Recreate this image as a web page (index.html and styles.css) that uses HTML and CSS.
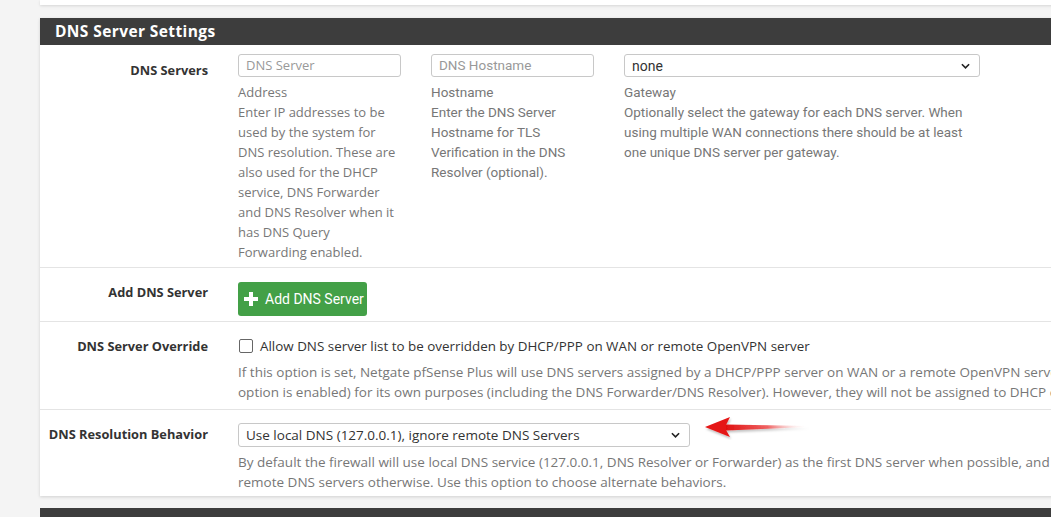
FILE: index.html
```html
<!DOCTYPE html>
<html>
<head>
<meta charset="utf-8">
<link rel="stylesheet" href="styles.css">
</head>
<body>
<div class="page">
  <div class="prev-panel"></div>
  <div class="panel">
    <div class="panel-heading">DNS Server Settings</div>
    <div class="row row-servers">
      <div class="label">DNS Servers</div>
      <div class="content cols">
        <div class="col col-a">
          <div class="input"><span class="ph">DNS Server</span></div>
          <div class="help sans">Address<br>Enter IP addresses to be used by the system for DNS resolution. These are also used for the DHCP service, DNS Forwarder and DNS Resolver when it has DNS Query Forwarding enabled.</div>
        </div>
        <div class="col col-b">
          <div class="input"><span class="ph narrow">DNS Hostname</span></div>
          <div class="help narrow">Hostname<br>Enter the DNS Server Hostname for TLS Verification in the DNS Resolver (optional).</div>
        </div>
        <div class="col col-c">
          <div class="select small"><span class="narrow">none</span>
            <svg class="chev" viewBox="0 0 10 6" width="9" height="6"><path d="M1 1 L5 5 L9 1" fill="none" stroke="#222" stroke-width="1.8"/></svg>
          </div>
          <div class="help narrow">Gateway<br>Optionally select the gateway for each DNS server. When using multiple WAN connections there should be at least one unique DNS server per gateway.</div>
        </div>
      </div>
    </div>
    <div class="row row-add">
      <div class="label">Add DNS Server</div>
      <div class="content">
        <div class="btn">
          <svg class="plus" viewBox="0 0 14 14" width="14" height="14"><path d="M5 0h4v5h5v4H9v5H5V9H0V5h5z" fill="#fff"/></svg>
          <span>Add DNS Server</span>
        </div>
      </div>
    </div>
    <div class="row row-override">
      <div class="label">DNS Server Override</div>
      <div class="content">
        <div class="check-line"><span class="checkbox"></span><span>Allow DNS server list to be overridden by DHCP/PPP on WAN or remote OpenVPN server</span></div>
        <div class="help sans wide w-override">If this option is set, Netgate pfSense Plus will use DNS servers assigned by a DHCP/PPP server on WAN or a remote OpenVPN server (if the option is enabled) for its own purposes (including the DNS Forwarder/DNS Resolver). However, they will not be assigned to DHCP clients.</div>
      </div>
    </div>
    <div class="row row-behavior">
      <div class="label">DNS Resolution Behavior</div>
      <div class="content">
        <div class="behavior-line">
          <div class="select big"><span>Use local DNS (127.0.0.1), ignore remote DNS Servers</span>
            <svg class="chev" viewBox="0 0 10 6" width="9" height="6"><path d="M1 1 L5 5 L9 1" fill="none" stroke="#222" stroke-width="1.8"/></svg>
          </div>
          <svg class="arrow" viewBox="0 0 110 26" width="110" height="26">
            <defs>
              <linearGradient id="tail" x1="0" y1="0" x2="1" y2="0">
                <stop offset="0" stop-color="#e01010"/>
                <stop offset="0.5" stop-color="#ee4040" stop-opacity="0.8"/>
                <stop offset="1" stop-color="#ffffff" stop-opacity="0"/>
              </linearGradient>
              <filter id="sh" x="-10%" y="-30%" width="130%" height="170%">
                <feDropShadow dx="1" dy="2" stdDeviation="1.2" flood-color="#000" flood-opacity="0.25"/>
              </filter>
            </defs>
            <g filter="url(#sh)">
              <path d="M22 10.5 L105 12 L105 13 L22 16.5 Z" fill="url(#tail)"/>
              <path d="M1 13 L26 3 L22 11 L22 16 L26 23 Z" fill="#e51616"/>
            </g>
          </svg>
        </div>
        <div class="help sans wide w-behavior">By default the firewall will use local DNS service (127.0.0.1, DNS Resolver or Forwarder) as the first DNS server when possible, and it will fall back to remote DNS servers otherwise. Use this option to choose alternate behaviors.</div>
      </div>
    </div>
  </div>
  <div class="next-panel"></div>
</div>
</body>
</html>
```

FILE: styles.css
```css
html, body {
  margin: 0;
  padding: 0;
  overflow: hidden;
}
body {
  width: 1051px;
  height: 517px;
  background: #f4f4f4;
  font-family: "Open Sans", "Liberation Sans", sans-serif;
  color: #333;
}
.page {
  padding-left: 40px;
}
.prev-panel {
  width: 1100px;
  height: 5px;
  background: #fff;
  box-shadow: 0 1px 3px rgba(0,0,0,0.12);
  margin-bottom: 13px;
}
.panel {
  width: 1100px;
  background: #fff;
  box-shadow: 0 1px 3px rgba(0,0,0,0.15);
}
.panel-heading {
  height: 27px;
  line-height: 27px;
  background: #3d3d3d;
  color: #fff;
  font-family: "Open Sans", sans-serif;
  font-weight: 700;
  font-size: 15.5px;
  letter-spacing: 0.4px;
  padding-left: 15px;
}
.row {
  display: flex;
  border-top: 1px solid #e4e4e4;
}
.panel-heading + .row {
  border-top: none;
}
.label {
  width: 168px;
  padding-right: 30px;
  text-align: right;
  font-family: "Open Sans", sans-serif;
  font-weight: 700;
  font-size: 12.8px;
  line-height: 20px;
  color: #333;
  flex-shrink: 0;
}
.content {
  flex: 1;
}
.row-servers .label { padding-top: 15px; }
.row-servers .content { padding-top: 9px; padding-bottom: 5px; }
.cols {
  display: flex;
  gap: 30px;
}
.col-a, .col-b { width: 163px; }
.col-c { width: 356px; }
.input {
  height: 21px;
  border: 1px solid #c8c8c8;
  border-radius: 3px;
  padding-left: 7px;
  line-height: 21px;
  font-size: 13px;
}
.ph { color: #999; }
.help {
  color: #777;
  font-size: 13px;
  line-height: 20px;
  margin-top: 5px;
}
.sans { font-family: "Open Sans", sans-serif; }
.narrow { font-family: Roboto, sans-serif; font-size: 13.5px; }
.select {
  position: relative;
  border: 1px solid #c8c8c8;
  border-radius: 3px;
  background: #fff;
  padding-left: 7px;
  box-sizing: border-box;
  display: flex;
  align-items: center;
  justify-content: space-between;
  padding-right: 9px;
}
.select.small { height: 23px; font-size: 14px; color: #333; }
.select.small .narrow { font-size: 14px; }
.select.big {
  width: 452px;
  height: 24px;
  font-size: 13.5px;
  color: #333;
  font-family: "Open Sans", sans-serif;
}
.row-add .label { padding-top: 14px; }
.row-add .content { padding-top: 14px; padding-bottom: 5px; }
.btn {
  display: inline-flex;
  align-items: center;
  height: 34px;
  width: 129px;
  box-sizing: border-box;
  background: #43a047;
  border-radius: 3px;
  color: #fff;
  padding-left: 6px;
  font-family: Roboto, sans-serif;
  font-size: 14px;
  gap: 7px;
}
.plus { flex-shrink: 0; }
.row-override .label { padding-top: 14px; }
.row-override .content { padding-top: 14px; padding-bottom: 7px; }
.check-line {
  display: flex;
  align-items: center;
  font-size: 13.4px;
  line-height: 20px;
  color: #333;
  gap: 7px;
  white-space: nowrap;
}
.checkbox {
  width: 12px;
  height: 12px;
  border: 1px solid #666;
  border-radius: 2px;
  margin-left: 1px;
  flex-shrink: 0;
}
.wide {
  margin-top: 6px;
  font-size: 13.5px;
}
.w-override { width: 895px; }
.w-behavior { width: 935px; }
.row-behavior .label { padding-top: 14px; }
.row-behavior .content { padding-top: 13px; padding-bottom: 4px; }
.behavior-line {
  display: flex;
  align-items: flex-start;
  gap: 14px;
}
.arrow { margin-top: -9px; }
.row-behavior .wide { margin-top: 6px; line-height: 19.5px; }
.next-panel {
  margin-top: 12px;
  width: 1100px;
  height: 20px;
  background: #3d3d3d;
}
```
